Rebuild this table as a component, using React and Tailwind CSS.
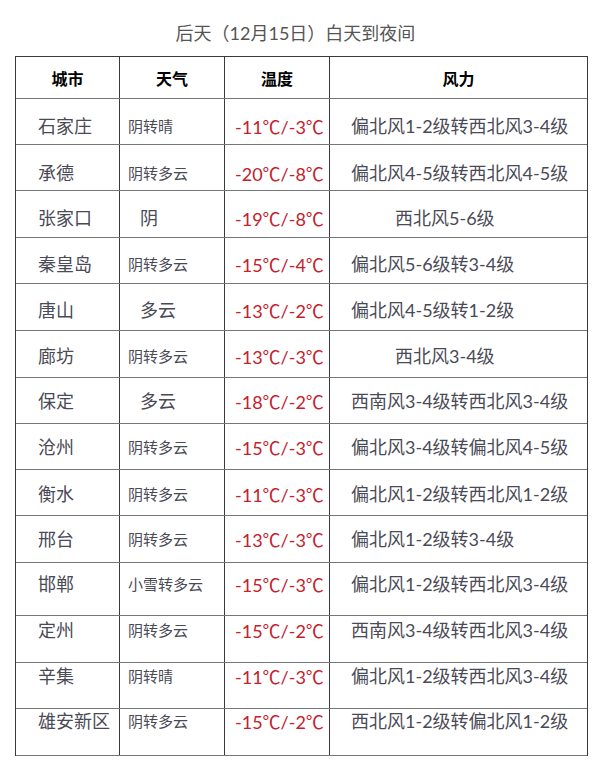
import React from "react";

const FONT = { fontFamily: 'Lato, "Noto Sans CJK SC", sans-serif' };

// one row per city; pt / h tuned to the picture
const rows = [
  { city: "石家庄", weather: "阴转晴", temp: ["-11", "-3"], wind: "偏北风1-2级转西北风3-4级", h: "h-[46px]", pt: "pt-[15px]" },
  { city: "承德", weather: "阴转多云", temp: ["-20", "-8"], wind: "偏北风4-5级转西北风4-5级", h: "h-[46px]", pt: "pt-[16px]" },
  { city: "张家口", weather: "阴", big: true, temp: ["-19", "-8"], wind: "西北风5-6级", short: true, h: "h-[47px]", pt: "pt-[15px]" },
  { city: "秦皇岛", weather: "阴转多云", temp: ["-15", "-4"], wind: "偏北风5-6级转3-4级", h: "h-[46px]", pt: "pt-[14px]" },
  { city: "唐山", weather: "多云", big: true, temp: ["-13", "-2"], wind: "偏北风4-5级转1-2级", h: "h-[47px]", pt: "pt-[14px]" },
  { city: "廊坊", weather: "阴转多云", temp: ["-13", "-3"], wind: "西北风3-4级", short: true, h: "h-[47px]", pt: "pt-[13px]" },
  { city: "保定", weather: "多云", big: true, temp: ["-18", "-2"], wind: "西南风3-4级转西北风3-4级", h: "h-[46px]", pt: "pt-[11px]" },
  { city: "沧州", weather: "阴转多云", temp: ["-15", "-3"], wind: "偏北风3-4级转偏北风4-5级", h: "h-[46px]", pt: "pt-[11px]" },
  { city: "衡水", weather: "阴转多云", temp: ["-11", "-3"], wind: "偏北风1-2级转西北风1-2级", h: "h-[46px]", pt: "pt-[12px]" },
  { city: "邢台", weather: "阴转多云", temp: ["-13", "-3"], wind: "偏北风1-2级转3-4级", h: "h-[47px]", pt: "pt-[11px]" },
  { city: "邯郸", weather: "小雪转多云", temp: ["-15", "-3"], wind: "偏北风1-2级转西北风3-4级", h: "h-[53px]", pt: "pt-[9px]" },
  { city: "定州", weather: "阴转多云", temp: ["-15", "-2"], wind: "西南风3-4级转西北风3-4级", h: "h-[47px]", pt: "pt-[2px]" },
  { city: "辛集", weather: "阴转晴", temp: ["-11", "-3"], wind: "偏北风1-2级转西北风3-4级", h: "h-[46px]", pt: "pt-[1px]" },
  { city: "雄安新区", weather: "阴转多云", temp: ["-15", "-2"], wind: "西北风1-2级转偏北风1-2级", h: "h-[47px]", pt: "pt-0" },
];

const headers = ["城市", "天气", "温度", "风力"];
const cols = "grid grid-cols-[104px_105px_105px_257px]";

// ℃ as the single CJK glyph, not Lato's "°C"
const Deg = () => <span style={{ fontFamily: '"Noto Sans CJK SC", sans-serif' }}>℃</span>;

export default function App() {
  return (
    <div className="w-[600px] h-[775px] bg-white" style={FONT}>
      {/* title */}
      <div className="w-[591px] pt-[21px] text-center text-[18px] leading-6 text-[#555]">
        后天（12月15日）白天到夜间
      </div>

      {/* table */}
      <div className="ml-[15px] mt-[11px] w-[573px] border-x border-t border-[#3a3a3a]">
        <div className={`${cols} h-[42px] border-b border-[#777]`}>
          {headers.map((t, i) => (
            <div
              key={t}
              className={`flex items-center justify-center pt-[3px] text-[16px] font-bold text-black ${i < 3 ? "border-r border-[#3a3a3a]" : ""}`}
            >
              {t}
            </div>
          ))}
        </div>

        {rows.map((r) => (
          <div key={r.city} className={`${cols} ${r.h} border-b border-[#777]`}>
            <div className={`border-r border-[#3a3a3a] pl-[22px] ${r.pt} text-[18px] leading-6 text-[#4a4a56] whitespace-nowrap`}>
              {r.city}
            </div>
            <div
              className={`border-r border-[#3a3a3a] ${r.pt} leading-6 text-[#4a4a56] whitespace-nowrap ${
                r.big ? "pl-[20px] text-[18px]" : "pl-[8px] text-[15px]"
              }`}
            >
              {r.weather}
            </div>
            <div className={`border-r border-[#3a3a3a] pl-[10px] ${r.pt} text-[18px] leading-6 text-[#c4212b] whitespace-nowrap`}>
              {r.temp[0]}
              <Deg />/{r.temp[1]}
              <Deg />
            </div>
            <div
              className={`${r.short ? "pl-[65px]" : "pl-[21px]"} ${r.pt} text-[18px] leading-6 text-[#4a4a56] whitespace-nowrap`}
            >
              {r.wind}
            </div>
          </div>
        ))}
      </div>
    </div>
  );
}
